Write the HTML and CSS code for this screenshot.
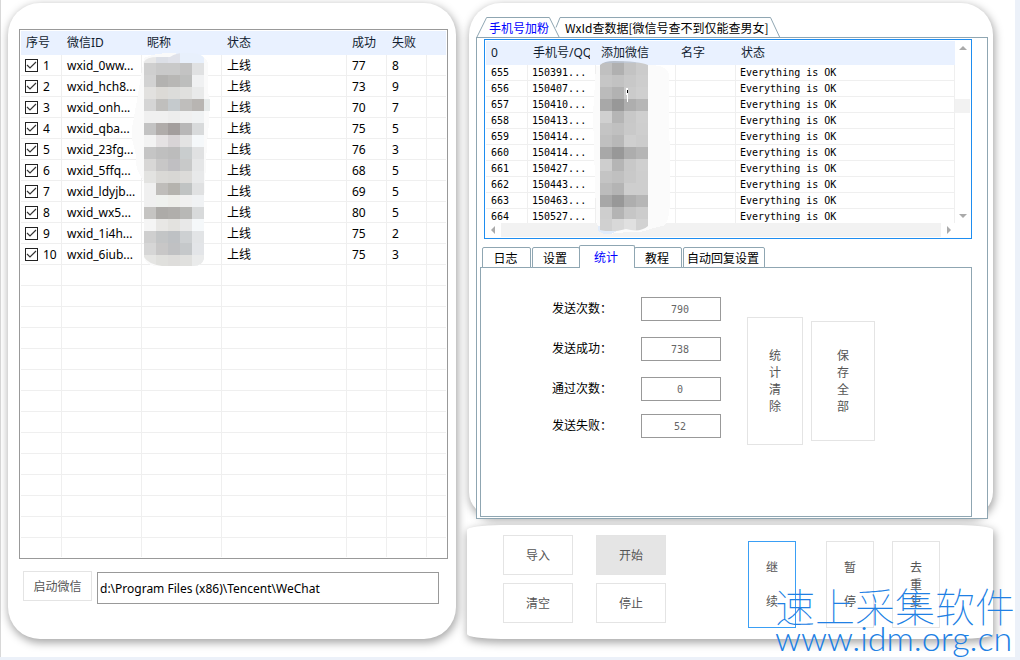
FILE: index.html
```html
<!DOCTYPE html>
<html lang="zh-CN">
<head>
<meta charset="utf-8">
<title>微信助手</title>
<link rel="stylesheet" href="styles.css">
</head>
<body>
<main class="window">
  <section class="card accounts">
    <div class="account-list">
      <table class="grid">
        <colgroup><col class="w41"><col class="w80"><col class="w80"><col class="w125"><col class="w40"><col class="w40"><col></colgroup>
        <thead><tr><th>序号</th><th>微信ID</th><th>昵称</th><th>状态</th><th>成功</th><th>失败</th><th></th></tr></thead>
        <tbody>
          <tr><td><label><input type="checkbox" checked>1</label></td><td>wxid_0ww...</td><td></td><td>上线</td><td>77</td><td>8</td><td></td></tr>
          <tr><td><label><input type="checkbox" checked>2</label></td><td>wxid_hch8...</td><td></td><td>上线</td><td>73</td><td>9</td><td></td></tr>
          <tr><td><label><input type="checkbox" checked>3</label></td><td>wxid_onh...</td><td></td><td>上线</td><td>70</td><td>7</td><td></td></tr>
          <tr><td><label><input type="checkbox" checked>4</label></td><td>wxid_qba...</td><td></td><td>上线</td><td>75</td><td>5</td><td></td></tr>
          <tr><td><label><input type="checkbox" checked>5</label></td><td>wxid_23fg...</td><td></td><td>上线</td><td>76</td><td>3</td><td></td></tr>
          <tr><td><label><input type="checkbox" checked>6</label></td><td>wxid_5ffq...</td><td></td><td>上线</td><td>68</td><td>5</td><td></td></tr>
          <tr><td><label><input type="checkbox" checked>7</label></td><td>wxid_ldyjb...</td><td></td><td>上线</td><td>69</td><td>5</td><td></td></tr>
          <tr><td><label><input type="checkbox" checked>8</label></td><td>wxid_wx5...</td><td></td><td>上线</td><td>80</td><td>5</td><td></td></tr>
          <tr><td><label><input type="checkbox" checked>9</label></td><td>wxid_1i4h...</td><td></td><td>上线</td><td>75</td><td>2</td><td></td></tr>
          <tr><td><label><input type="checkbox" checked>10</label></td><td>wxid_6iub...</td><td></td><td>上线</td><td>75</td><td>3</td><td></td></tr>
          <tr><td></td><td></td><td></td><td></td><td></td><td></td><td></td></tr>
          <tr><td></td><td></td><td></td><td></td><td></td><td></td><td></td></tr>
          <tr><td></td><td></td><td></td><td></td><td></td><td></td><td></td></tr>
          <tr><td></td><td></td><td></td><td></td><td></td><td></td><td></td></tr>
          <tr><td></td><td></td><td></td><td></td><td></td><td></td><td></td></tr>
          <tr><td></td><td></td><td></td><td></td><td></td><td></td><td></td></tr>
          <tr><td></td><td></td><td></td><td></td><td></td><td></td><td></td></tr>
          <tr><td></td><td></td><td></td><td></td><td></td><td></td><td></td></tr>
          <tr><td></td><td></td><td></td><td></td><td></td><td></td><td></td></tr>
          <tr><td></td><td></td><td></td><td></td><td></td><td></td><td></td></tr>
          <tr><td></td><td></td><td></td><td></td><td></td><td></td><td></td></tr>
          <tr><td></td><td></td><td></td><td></td><td></td><td></td><td></td></tr>
          <tr><td></td><td></td><td></td><td></td><td></td><td></td><td></td></tr>
          <tr class="cut"><td></td><td></td><td></td><td></td><td></td><td></td><td></td></tr>
        </tbody>
      </table>
      <svg class="mosaic mosaic-names" width="80" height="218" viewBox="132 50 80 218" aria-hidden="true">
        <path fill="#fafafa" d="M144 58q20-8 40-3q20-4 24 8l1 60l-2 20l-3 60v56q-3 8-12 7h-38q-8-2-10-8v-56l2-18q-12-14-10-28l-5-22l7-40z"/>
        <clipPath id="names-shape"><path d="M144 62q2-5 14-5h12q8-5 20-4q14 0 16 9h-2v37h6v12h-6v148q-2 7-10 7h-32q-14-2-18-9z"/></clipPath>
        <g clip-path="url(#names-shape)" id="names"></g>
      </svg>
    </div>
    <div class="launch">
      <button class="btn" type="button">启动微信</button>
      <input class="path" type="text" aria-label="微信路径" value="d:\Program Files (x86)\Tencent\WeChat">
    </div>
  </section>

  <div class="side">
    <section class="card work">
      <div class="top-tabs">
        <button class="top-tab current" type="button">手机号加粉
          <svg viewBox="0 0 87 21" preserveAspectRatio="none" aria-hidden="true"><path d="M.5 21L11 .5H76L86.500 21"/></svg></button>
        <button class="top-tab" type="button">WxId查数据[微信号查不到仅能查男女]
          <svg viewBox="0 0 224 20" preserveAspectRatio="none" aria-hidden="true"><path d="M1 10L5 .5H214L223.500 20"/></svg></button>
      </div>
      <div class="top-page">
        <div class="phone-list">
          <table class="grid phones">
            <colgroup><col class="w42"><col class="w68"><col class="w80"><col class="w60"><col></colgroup>
            <thead><tr><th>0</th><th><div class="clip">手机号/QQ</div></th><th>添加微信</th><th>名字</th><th>状态</th></tr></thead>
            <tbody>
              <tr><td>655</td><td>150391...</td><td></td><td></td><td>Everything is OK</td></tr>
              <tr><td>656</td><td>150407...</td><td></td><td></td><td>Everything is OK</td></tr>
              <tr><td>657</td><td>150410...</td><td></td><td></td><td>Everything is OK</td></tr>
              <tr><td>658</td><td>150413...</td><td></td><td></td><td>Everything is OK</td></tr>
              <tr><td>659</td><td>150414...</td><td></td><td></td><td>Everything is OK</td></tr>
              <tr><td>660</td><td>150414...</td><td></td><td></td><td>Everything is OK</td></tr>
              <tr><td>661</td><td>150427...</td><td></td><td></td><td>Everything is OK</td></tr>
              <tr><td>662</td><td>150443...</td><td></td><td></td><td>Everything is OK</td></tr>
              <tr><td>663</td><td>150463...</td><td></td><td></td><td>Everything is OK</td></tr>
              <tr class="cut"><td>664</td><td>150527...</td><td></td><td></td><td>Everything is OK</td></tr>
            </tbody>
          </table>
          <div class="vbar" aria-hidden="true">
            <svg width="8" height="4"><path d="M0 4L4 0L8 4z"/></svg>
            <span class="vthumb"></span>
            <svg width="8" height="4"><path d="M0 0L4 4L8 0z"/></svg>
          </div>
          <div class="hbar" aria-hidden="true">
            <svg width="4" height="8"><path d="M4 0L0 4L4 8z"/></svg>
            <span class="hthumb"></span>
            <svg width="4" height="8"><path d="M0 0L4 4L0 8z"/></svg>
          </div>
          <svg class="mosaic mosaic-phones" width="80" height="176" viewBox="592 60 80 176" aria-hidden="true">
            <path fill="#fbfbfb" d="M596 66l52-1q20 0 21 10l1 130q-2 22-8 21l-12 3q-8 4-22 3l-20 2q-12-2-12-20l-3-100z"/>
            <path fill="#e2ecfa" d="M598 226h20v4q-9 8-20 1z"/>
            <clipPath id="phones-shape"><path d="M600 65q4-4 14-4q24 0 34 4v161q-8 7-22 3q-14 4-26 1z"/></clipPath>
            <g clip-path="url(#phones-shape)" id="phones"></g>
            <path fill="#fff" d="M626 88h2v14h-1z"/><path d="M627 90h1v3h-1z"/>
          </svg>
        </div>

        <div class="tabs">
          <button class="tab t49" type="button">日志</button>
          <button class="tab t48" type="button">设置</button>
          <button class="tab current" type="button">统计</button>
          <button class="tab t48" type="button">教程</button>
          <button class="tab t82" type="button">自动回复设置</button>
        </div>
        <div class="stats">
          <div class="fields">
            <label for="sent">发送次数：</label><input id="sent" type="text" value="790">
            <label for="ok">发送成功：</label><input id="ok" type="text" value="738">
            <label for="pass">通过次数：</label><input id="pass" type="text" value="0">
            <label for="fail">发送失败：</label><input id="fail" type="text" value="52">
          </div>
          <div class="stat-actions">
            <button class="btn clear" type="button">统<br>计<br>清<br>除</button>
            <button class="btn save" type="button">保<br>存<br>全<br>部</button>
          </div>
        </div>
      </div>
    </section>

    <section class="card controls">
      <div class="pairs">
        <button class="btn" type="button">导入</button>
        <button class="btn pressed" type="button">开始</button>
        <button class="btn" type="button">清空</button>
        <button class="btn" type="button">停止</button>
      </div>
      <div class="talls">
        <button class="btn tall focus" type="button">继<br><br>续</button>
        <button class="btn tall" type="button">暂<br><br>停</button>
        <button class="btn tall last" type="button">去<br>重<br>复</button>
      </div>
    </section>
  </div>
  <div class="watermark"><div class="wm-name">速上采集软件</div><div class="wm-url">www.idm.org.cn</div></div>
</main>
<script src="script.js"></script>
</body>
</html>
```

FILE: styles.css
```css
* { box-sizing: border-box; }
body {
  margin: 0;
  background: #ecf1f9;
  font: 12px/16px "Noto Sans", "Noto Sans CJK SC", sans-serif;
  color: #000;
}
button, input { font: inherit; color: inherit; margin: 0; }
.window {
  position: relative;
  display: grid;
  grid-template-columns: minmax(0, 448fr) minmax(0, 526fr);
  gap: 11px;
  margin-right: 5px;
  padding: 3px 22px 18px 7px;
  background: #fff;
  border-left: 1px solid #d8d8d8;
}
.card {
  background: #fff;
  box-shadow: 1px 3px 8px 1px rgba(0, 0, 0, .34);
}
.accounts { padding: 26px 8px 35px 11px; border-radius: 32px; }

/* lists */
.account-list { position: relative; padding: 1px; border: 1px solid #999; }
.grid { width: 100%; table-layout: fixed; border-collapse: separate; border-spacing: 0; }
.w40 { width: 40px; }
.w41 { width: 41px; }
.w42 { width: 42px; }
.w60 { width: 60px; }
.w68 { width: 68px; }
.w80 { width: 80px; }
.w125 { width: 125px; }
.grid th {
  height: 24px;
  padding: 0 0 0 5px;
  background: #e9f1ff;
  color: #111c30;
  font-weight: 400;
  text-align: left;
  white-space: nowrap;
}
.grid td {
  height: 21px;
  padding: 1px 0 0 5px;
  border: solid #efefef;
  border-width: 0 1px 1px 0;
  white-space: nowrap;
}
.grid td:last-child { border-right: 0; }
.grid .cut td { height: 19px; border-bottom: 0; }
.grid td:first-child { padding-left: 4px; }
.grid label { display: flex; align-items: center; gap: 5px; }
.grid input {
  appearance: none;
  flex: none;
  width: 13px;
  height: 13px;
  border: 1px solid #222;
  background: url("data:image/svg+xml,%3Csvg xmlns='http://www.w3.org/2000/svg' viewBox='0 0 11 11'%3E%3Cpath d='M1 5L4 8L10 2' fill='none' stroke='%23333' stroke-width='1.200'/%3E%3C/svg%3E");
}
.mosaic { position: absolute; shape-rendering: crispEdges; }
.mosaic-names { left: 112px; top: 20px; }
.mosaic-phones { left: 107px; top: 20px; }

.launch { display: flex; gap: 5px; padding: 12px 9px 0 4px; }
.btn {
  padding: 0;
  background: #fff;
  border: 1px solid #e4e4e4;
  color: #555;
  line-height: 17px;
}
.launch .btn { width: 69px; height: 30px; }
.path { flex: 1; min-width: 0; height: 32px; margin-top: 1px; padding: 0 2px; border: 1px solid #999; background: #fff; }

/* right side */
.side { display: flex; flex-direction: column; gap: 9px; min-width: 0; }
.work { margin-left: 2px; padding: 14px 5px 0 7px; border-radius: 32px 32px 24px 24px; }
.top-tabs { display: flex; height: 20px; font-family: "Noto Sans CJK SC", sans-serif; }
.top-tab {
  position: relative;
  height: 21px;
  padding: 0 11px 0 13px;
  border: 0;
  background: none;
  white-space: nowrap;
}
.top-tab + .top-tab { margin-left: -5px; padding: 0 12px 0 10px; }
.top-tab svg { position: absolute; inset: 0; width: 100%; height: 100%; }
.top-tab path { fill: none; stroke: #8fa6b2; vector-effect: non-scaling-stroke; }
.current { color: #00f; }
.top-page {
  margin-bottom: -3px;
  padding: 1px 15px 1px 3px;
  border: 1px solid #8fa6b2;
  background: #fff;
}
.phone-list {
  position: relative;
  display: grid;
  grid-template-columns: minmax(0, 1fr) 15px;
  margin-left: 4px;
  padding: 1px;
  border: 1px solid #1e8df0;
}
.phones td { height: 16px; font: 10px/12px "DejaVu Sans Mono", monospace; padding-left: 4px; }
.phones td:last-child { border-right: 1px solid #efefef; }
.phones td:first-child, .phones th { padding-left: 5px; }
.phones .cut td { height: 14px; }
.clip { width: 57px; overflow: hidden; }
.vbar { display: flex; flex-direction: column; align-items: center; padding: 5px 0; }
.vthumb { width: 15px; height: 14px; margin: 49px 0 auto; background: #f2f2f2; }
.hbar { display: flex; align-items: center; height: 14px; padding: 0 4px 0 5px; gap: 6px; }
.hthumb { flex: 1; height: 14px; background: #f2f2f2; }
.vbar path, .hbar path { fill: #aaa; }

.tabs {
  position: relative;
  display: flex;
  align-items: flex-end;
  height: 23px;
  margin: 6px 0 -1px 2px;
  font-family: "Noto Sans CJK SC", sans-serif;
}
.tab {
  height: 21px;
  padding: 0 2px 0 0;
  border: 1px solid #8fa6b2;
  border-radius: 2px 2px 0 0;
  background: #fff;
  white-space: nowrap;
}
.tab.current { width: 56px; height: 23px; margin: 0 -1px; border-bottom: 0; }
.tab + .t48 { margin-left: 1px; }
.tab.current + .t48 { margin-left: 0; }
.t48 { width: 48px; }
.t49 { width: 49px; }
.t82 { width: 82px; margin-left: 1px; }
.stats {
  display: flex;
  align-items: flex-start;
  gap: 26px;
  min-height: 250px;
  padding: 29px 20px 20px 71px;
  border: 1px solid #8fa6b2;
}
.fields { display: grid; grid-template: 40px 40px 37px 24px / 89px 80px; align-items: start; line-height: 24px; }
.fields label { white-space: nowrap; }
.fields input {
  width: 80px;
  height: 24px;
  padding: 0 2px 0 0;
  border: 1px solid #999;
  background: #fff;
  color: #666;
  font: 10px/12px "DejaVu Sans Mono", monospace;
  text-align: center;
}
.stat-actions { display: flex; align-items: center; gap: 8px; margin-top: 20px; }
.clear { width: 56px; height: 128px; }
.save { width: 64px; height: 120px; }

.controls {
  display: flex;
  justify-content: space-between;
  align-items: flex-start;
  padding: 10px 53px 9px 36px;
  border-radius: 34px / 5px;
}
.pairs { display: grid; grid-template-columns: 70px 70px; gap: 8px 23px; padding-bottom: 7px; }
.pairs .btn { height: 40px; }
.pairs .pressed { background: #e5e5e5; }
.talls { display: flex; padding-top: 6px; }
.tall { width: 48px; height: 87px; }
.tall + .tall { margin-left: 30px; }
.tall + .last { margin-left: 18px; }
.btn.focus { border-color: #3a9ff5; }

.watermark {
  position: absolute;
  right: -2px;
  bottom: 6px;
  width: 242px;
  color: #2080e4;
  white-space: nowrap;
  pointer-events: none;
}
.wm-name { font: 100 40px/40px "Noto Sans CJK SC", sans-serif; }
.wm-url { font: 300 34px/26px Lato, sans-serif; }
```

FILE: script.js
```javascript
// Fills a group with 12px blocks, one row of colours per line.
function fillBlocks(id, left, top, rows) {
  var group = document.getElementById(id);
  rows.forEach(function (row, r) {
    row.split(" ").forEach(function (color, c) {
      var rect = document.createElementNS("http://www.w3.org/2000/svg", "rect");
      rect.setAttribute("x", left + c * 12);
      rect.setAttribute("y", top + r * 12);
      rect.setAttribute("width", 12);
      rect.setAttribute("height", 12);
      rect.setAttribute("fill", "#" + (color.length === 2 ? color + color + color : color));
      group.appendChild(rect);
    });
  });
}
fillBlocks("names", 144, 51, [
  "e8 dcdfe6 e0e2ea e8f0fc e8f0fc",
  "cf c9 c9 c3 e0e1e2",
  "d2 b3b2b0 b8b7b5 bdbebd f0f1f2",
  "e2e1df dcdad6 dcdcda e0e0de e9eaea",
  "d5 c0bfbd c5cacd bfbebc b8b5b2 e6eaea",
  "f0 f0 ed f0 f0f2f3",
  "c3 b0acaa a39e9d b8b7b7 d8dadb",
  "f3 e5e2e3 d8d4d6 e3 f5f8fa",
  "c5 bf bc c9cdce e0e1e2",
  "d8d7d6 c8c7c7 c0bfc2 c8c9c9 e5e6e7",
  "e3e3e1 dad9d6 d8d7d4 dcdbd9 e8e9ea",
  "f0 bfbdba b5b3ae c0c3c3 e0e1e2",
  "f0 eff1ee eeeeea f0 f0f2f4",
  "c5c4c2 adaba8 b0aeab b8b8b6 d8dadb",
  "f5 e8e7e5 e3e2df e8 f5f8fa",
  "cf c3c5c6 bec1c4 cdd0d2 e2e4e6",
  "d6 c8c7c7 c0c1c3 c5c8ca e3e5e8",
  "e5e5e3 e0e0dd dedddb e0e0de eaebeb"
]);
fillBlocks("phones", 600, 51, [
  "b8c0cc b8c0cc c0c8d4 c8d0dc",
  "c0 b0 c3 cb",
  "c6 c2 c8 cd",
  "bb b2 cb cf",
  "a8 98 ae b6",
  "d0 b5 c8 cf",
  "c4 c0 c9 ce",
  "c0 b8 cf cc",
  "a8 98 ad b5",
  "ce b5 c8 cf",
  "c4 c0 c9 ce",
  "bc b4 ce ce",
  "a7 98 ae b6",
  "ce b4 c6 cc",
  "d0 d8 e0 d2"
]);
```
